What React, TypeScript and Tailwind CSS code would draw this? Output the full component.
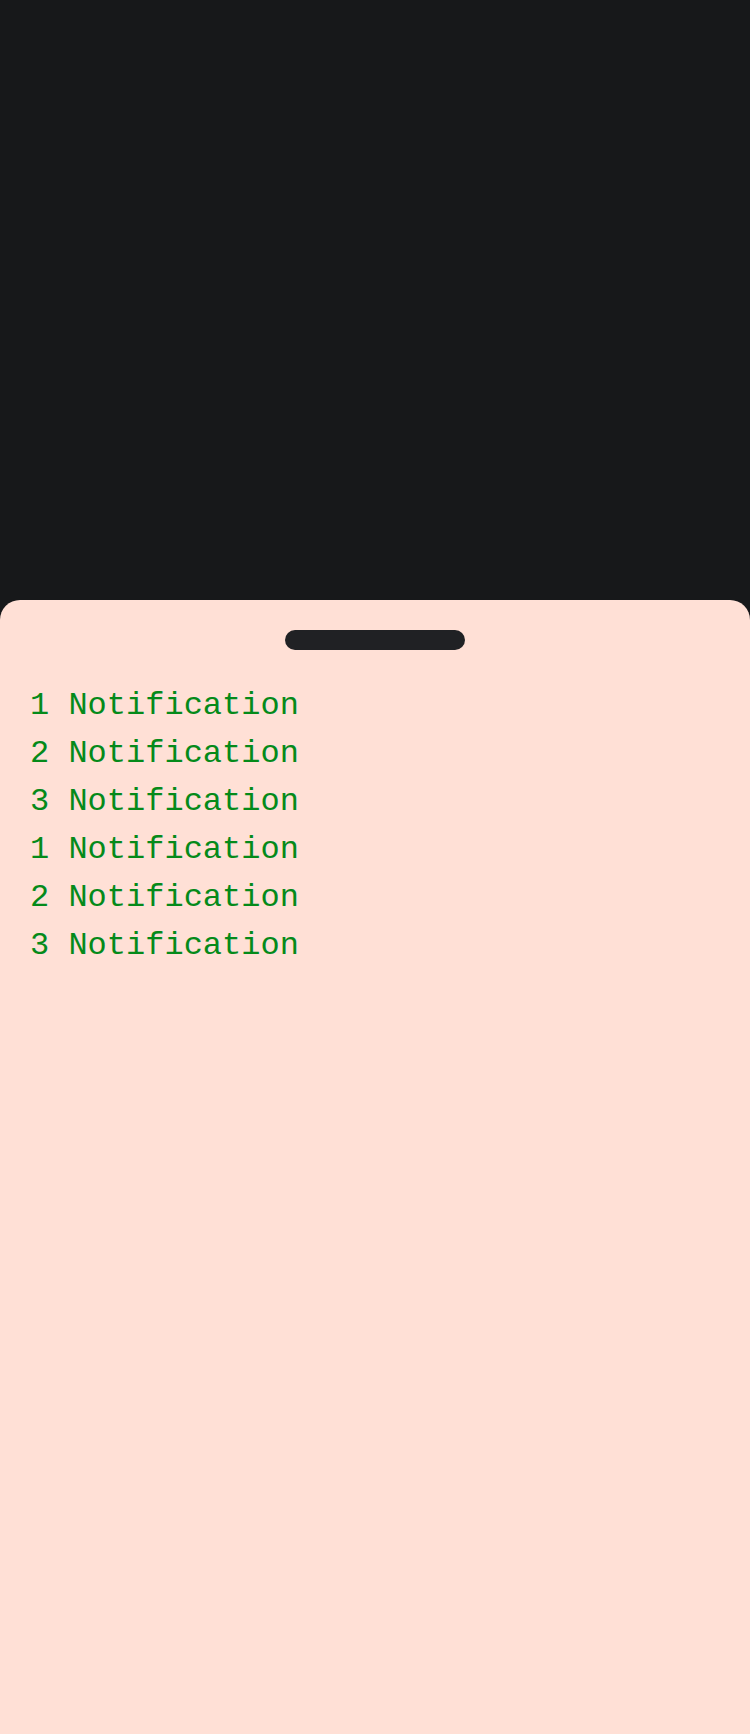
const items = ['1', '2', '3', '1', '2', '3']

export default function App() {
  return (
    <div className="flex h-[1734px] w-[750px] flex-col bg-[#17181a]">
      {/* backdrop */}
      <div className="h-[600px] shrink-0" />

      {/* bottom sheet */}
      <div className="flex flex-1 flex-col rounded-t-[20px] bg-[#ffe0d6] px-[30px] pt-[30px]">
        <div className="mx-auto h-[20px] w-[180px] rounded-full bg-[#202124]" />
        <ul className="mt-[32px] font-['Liberation_Mono',monospace] text-[32px] leading-[48px] text-[#058a1a]">
          {items.map((n, i) => (
            <li key={i}>{n} Notification</li>
          ))}
        </ul>
      </div>
    </div>
  )
}
